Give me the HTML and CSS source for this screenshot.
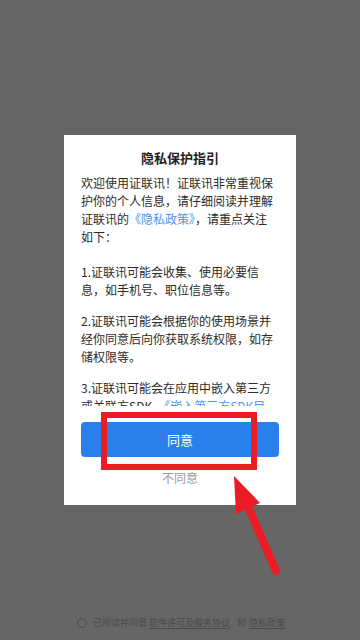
FILE: index.html
```html
<!DOCTYPE html>
<html lang="zh-CN">
<head>
<meta charset="utf-8">
<meta name="viewport" content="width=360, initial-scale=1">
<title>隐私保护指引</title>
<link rel="stylesheet" href="styles.css">
</head>
<body>
<div class="screen">
  <div class="page">
    <div class="footer">
      <span class="radio"></span>
      <span class="agree">已阅读并同意</span>
      <span class="doc">软件许可及服务协议</span>
      <span class="and">和</span>
      <span class="doc doc-2">隐私政策</span>
    </div>
  </div>

  <div class="mask">
    <div class="dialog">
      <div class="title">隐私保护指引</div>
      <div class="content">
        <p class="intro">欢迎使用证联讯！证联讯非常重视保护你的个人信息，请仔细阅读并理解证联讯的<span class="link">《隐私政策》</span>，请重点关注如下：</p>
        <p class="item">1.证联讯可能会收集、使用必要信息，如手机号、职位信息等。</p>
        <p class="item">2.证联讯可能会根据你的使用场景并经你同意后向你获取系统权限，如存储权限等。</p>
        <p class="item">3.证联讯可能会在应用中嵌入第三方或关联方SDK，<span class="link">《嵌入第三方SDK目录》</span>，用于为你提供更好的服务。</p>
      </div>
      <button class="btn-agree">同意</button>
      <div class="btn-refuse">不同意</div>
    </div>
  </div>

  <div class="mark-box"></div>
  <svg class="mark-arrow" width="360" height="640" viewBox="0 0 360 640">
    <polygon points="234,476 236,514 260,503" fill="#ed1c24"/>
    <line x1="246" y1="502" x2="276" y2="571" stroke="#ed1c24" stroke-width="8" stroke-linecap="round"/>
  </svg>
</div>
</body>
</html>
```

FILE: styles.css
```css
* {
  box-sizing: border-box;
}

html, body {
  margin: 0;
  padding: 0;
}

body {
  font-family: "Noto Sans CJK SC", "Noto Sans", sans-serif;
  background: #666666;
}

.screen {
  position: relative;
  width: 360px;
  height: 640px;
  overflow: hidden;
  background: #666666;
}

.page {
  height: 640px;
  display: flex;
  flex-direction: column;
  justify-content: flex-end;
}

.footer {
  display: flex;
  justify-content: center;
  align-items: center;
  height: 12px;
  margin-bottom: 11px;
  font-size: 9px;
  line-height: 12px;
  color: #4b4b4b;
  padding-left: 2px;
}

.radio {
  width: 10px;
  height: 10px;
  border: 1px solid #4b4b4b;
  border-radius: 50%;
  margin-right: 6px;
}

.doc {
  margin-left: 2px;
  text-decoration: underline;
  text-underline-offset: 2px;
}

.and {
  margin-left: 7px;
}

.doc-2 {
  margin-left: 3px;
}

.mask {
  position: absolute;
  inset: 0;
  display: flex;
  justify-content: center;
  align-items: center;
}

.dialog {
  width: 232px;
  background: #ffffff;
  padding: 14px 17px 18px;
  display: flex;
  flex-direction: column;
}

.title {
  font-size: 13px;
  line-height: 18px;
  font-weight: 700;
  color: #222222;
  text-align: center;
}

.content {
  margin-top: 7px;
  height: 232px;
  overflow: hidden;
  font-size: 12px;
  line-height: 18px;
  color: #2b2b2b;
}

.content p {
  margin: 0;
}

.content .intro {
  margin-bottom: 17px;
}

.content .item {
  margin-bottom: 13px;
}

.link {
  color: #4a98f3;
}

.btn-agree {
  margin-top: 16px;
  height: 35px;
  border: none;
  border-radius: 4px;
  background: #2a80eb;
  color: #ffffff;
  font-family: inherit;
  font-size: 13px;
  padding: 0;
}

.btn-refuse {
  margin-top: 12px;
  font-size: 12px;
  line-height: 18px;
  color: #9a9a9a;
  text-align: center;
}

.mark-box {
  position: absolute;
  left: 101px;
  top: 412px;
  width: 156px;
  height: 58px;
  border: 6px solid #ed1c24;
}

.mark-arrow {
  position: absolute;
  left: 0;
  top: 0;
  pointer-events: none;
}
```
